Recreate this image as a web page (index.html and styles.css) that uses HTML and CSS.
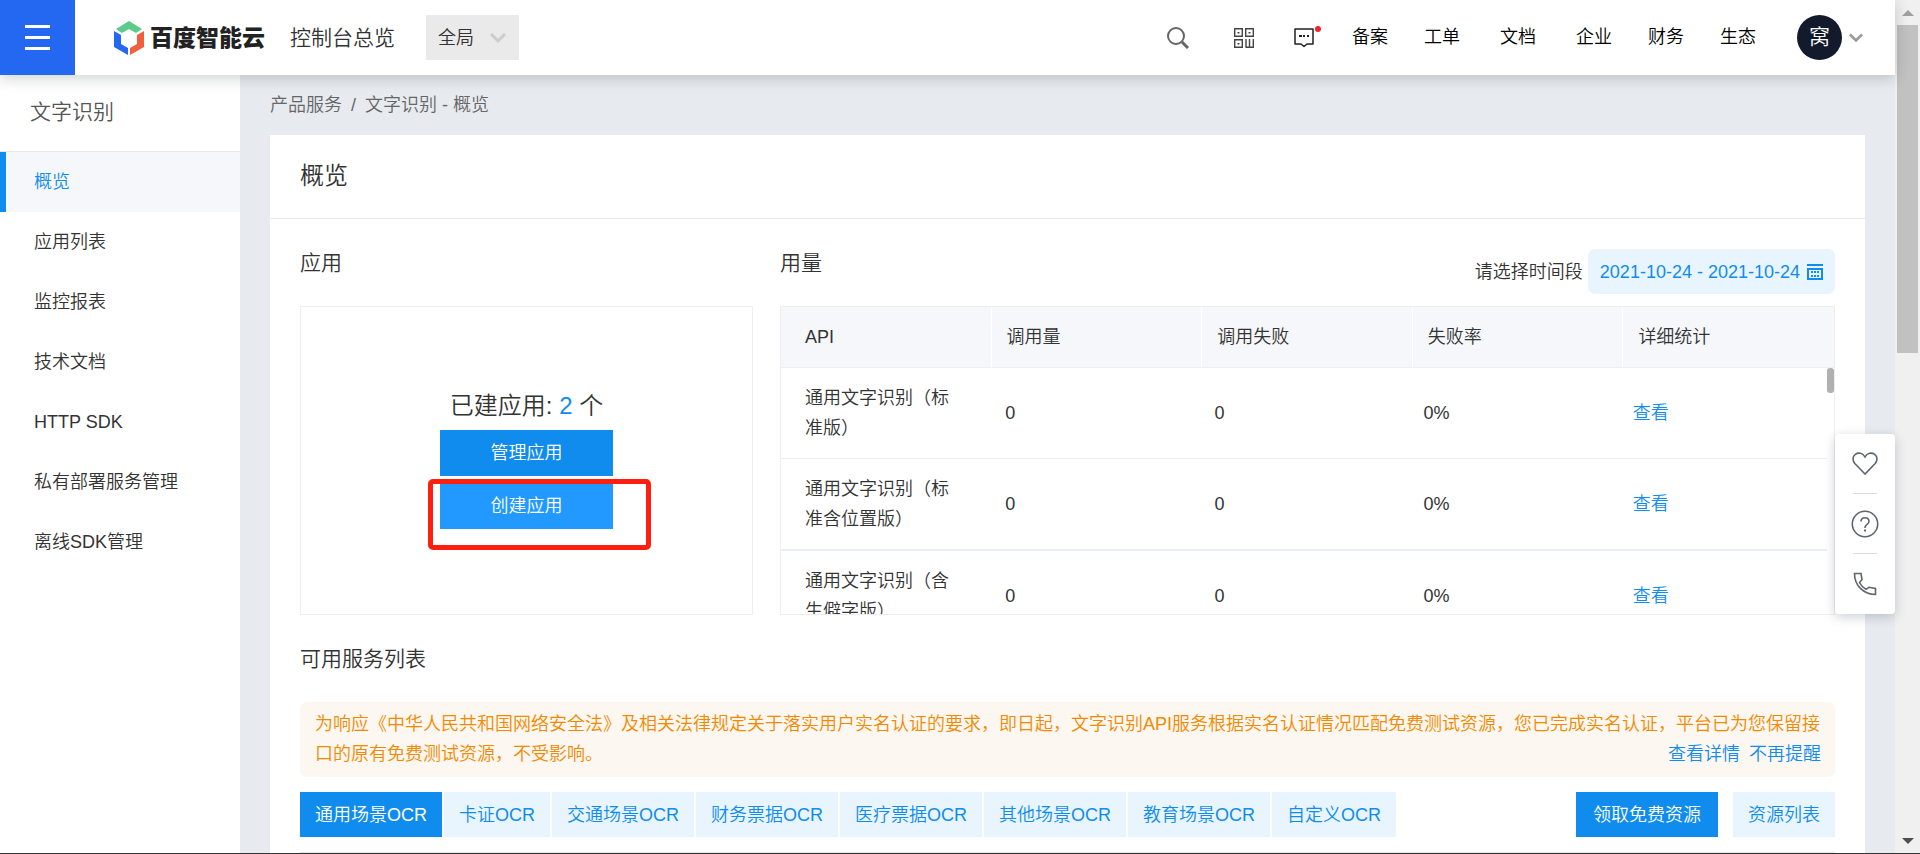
FILE: index.html
```
<!DOCTYPE html>
<html lang="zh-CN">
<head>
<meta charset="utf-8">
<title>文字识别 - 概览</title>
<link rel="stylesheet" href="styles.css">
</head>
<body>
<div class="window">
  <div class="page">
    <header class="topbar">
      <button class="menu-btn" aria-label="菜单"><span></span><span></span><span></span></button>
      <a class="brand" href="#">
        <svg width="30" height="34" viewBox="0 0 30 34" aria-hidden="true">
          <path fill="#5acb8b" d="M15 0 28 8 22 12 15 8 8 12 2 8z"/>
          <path fill="#2468f2" d="M0 10 7 14V23L14 27V34L0 26z"/>
          <path fill="#f0603c" d="M30 10 23 14V23L16 27V34L30 26z"/>
        </svg>
        <span>百度智能云</span>
      </a>
      <a class="overview" href="#">控制台总览</a>
      <button class="region">全局
        <svg width="18" height="12" viewBox="0 0 18 12" aria-hidden="true"><path d="M2 2 9 9 16 2" fill="none" stroke="#ccc" stroke-width="3"/></svg>
      </button>
      <nav class="tools">
        <button class="icon-btn search" aria-label="搜索"><svg width="22" height="22" viewBox="0 0 22 22"><g fill="none" stroke="#666" stroke-width="2"><circle cx="9" cy="9" r="8"/><path d="M15 15 21 21" stroke-width="3"/></g></svg></button>
        <button class="icon-btn qr" aria-label="二维码"><svg width="20" height="20" viewBox="0 0 20 20"><g fill="none" stroke="#444" stroke-width="1.4"><path d="M.7.7H8.300V8.300H.7zM11.700.7H19.300V8.300H11.700zM.7 11.700H8.300V19.300H.7zM12 11V19.300M15.500 11V19.300M19.300 11V19.300H11.500"/></g><path fill="#444" d="M3.500 4h2v1.400h-2zM14.500 4h2v1.400h-2zM3.500 15h2v1.400h-2z"/></svg></button>
        <button class="icon-btn message" aria-label="消息"><svg width="20" height="20" viewBox="0 0 20 20"><path d="M1 1H19V16H13L10 18.500 7 16H1z" fill="none" stroke="#222" stroke-width="1.500" stroke-linejoin="round"/><path d="M5 8h3M9 8h2M13 8h2" stroke="#222" stroke-width="2"/></svg><i class="dot"></i></button>
        <a href="#">备案</a><a href="#">工单</a><a class="spaced" href="#">文档</a><a class="spaced" href="#">企业</a><a href="#">财务</a><a href="#">生态</a>
        <button class="account"><span class="avatar">窝</span><svg width="14" height="10" viewBox="0 0 14 10" aria-hidden="true"><path d="M1 1.500 7 7.500 13 1.500" fill="none" stroke="#999" stroke-width="2.500"/></svg></button>
      </nav>
    </header>
    <div class="shell">
      <aside class="sidebar">
        <h2>文字识别</h2>
        <nav>
          <a class="active" href="#">概览</a>
          <a href="#">应用列表</a>
          <a href="#">监控报表</a>
          <a href="#">技术文档</a>
          <a href="#">HTTP SDK</a>
          <a href="#">私有部署服务管理</a>
          <a href="#">离线SDK管理</a>
        </nav>
      </aside>
      <main class="main">
        <div class="crumbs"><a href="#">产品服务</a><span>/</span><a href="#">文字识别 - 概览</a></div>
        <section class="card">
          <h1>概览</h1>
          <div class="content">
            <div class="columns">
              <section class="apps">
                <div class="section-head"><h3>应用</h3></div>
                <div class="app-box">
                  <p>已建应用: <b>2</b> 个</p>
                  <button class="primary">管理应用</button>
                  <div class="marked"><button class="primary hover">创建应用</button><i class="marker"></i></div>
                </div>
              </section>
              <section class="usage">
                <div class="section-head">
                  <h3>用量</h3>
                  <div class="period"><label for="range">请选择时间段</label>
                    <button id="range" class="range">2021-10-24 - 2021-10-24
                      <svg width="16" height="16" viewBox="0 0 16 16" aria-hidden="true"><path fill="#108cee" d="M0 0H16V2H0zM0 4H16V16H0z"/><path fill="#e8f5ff" d="M2 6H14V14H2z"/><path fill="#108cee" d="M4 7h2v2H4zM7 7h2v2H7zM10 7h2v2h-2zM4 11h2v2H4zM7 11h2v2H7zM10 11h2v2h-2z"/></svg>
                    </button>
                  </div>
                </div>
                <div class="usage-box">
                  <table class="head">
                    <thead><tr><th>API</th><th>调用量</th><th>调用失败</th><th>失败率</th><th>详细统计</th></tr></thead>
                  </table>
                  <div class="rows">
                    <table class="body">
                      <tbody>
                        <tr><td>通用文字识别（标准版）</td><td>0</td><td>0</td><td>0%</td><td><a href="#">查看</a></td></tr>
                        <tr><td>通用文字识别（标准含位置版）</td><td>0</td><td>0</td><td>0%</td><td><a href="#">查看</a></td></tr>
                        <tr><td>通用文字识别（含生僻字版）</td><td>0</td><td>0</td><td>0%</td><td><a href="#">查看</a></td></tr>
                      </tbody>
                    </table>
                    <i class="thumb"></i>
                  </div>
                </div>
              </section>
            </div>
            <h3 class="services">可用服务列表</h3>
            <div class="notice">为响应《中华人民共和国网络安全法》及相关法律规定关于落实用户实名认证的要求，即日起，文字识别API服务根据实名认证情况匹配免费测试资源，您已完成实名认证，平台已为您保留接口的原有免费测试资源，不受影响。<span class="notice-links"><a href="#">查看详情</a><a href="#">不再提醒</a></span></div>
            <div class="tab-row">
              <div class="tabs">
                <button class="tab current">通用场景OCR</button>
                <button class="tab">卡证OCR</button>
                <button class="tab">交通场景OCR</button>
                <button class="tab">财务票据OCR</button>
                <button class="tab">医疗票据OCR</button>
                <button class="tab">其他场景OCR</button>
                <button class="tab">教育场景OCR</button>
                <button class="tab">自定义OCR</button>
              </div>
              <div class="actions"><button class="claim">领取免费资源</button><button class="tab">资源列表</button></div>
            </div>
            <div class="list-top"></div>
          </div>
        </section>
      </main>
    </div>
    <aside class="float">
      <button aria-label="收藏"><svg width="26" height="24" viewBox="0 0 26 24"><path d="M13 22 2.800 11.500C.2 8.500.6 4.500 3.300 2.400 6.300.2 10.800.8 13 5 15.200.8 19.700.2 22.700 2.400 25.400 4.500 25.800 8.500 23.200 11.500z" fill="none" stroke="#5f656e" stroke-width="1.600"/></svg></button>
      <button aria-label="帮助"><svg width="28" height="28" viewBox="0 0 28 28"><g fill="none" stroke="#5f656e" stroke-width="1.600"><circle cx="14" cy="14" r="12.700"/><path d="M10 11.500C10 6.500 18 6.500 18 11.500 18 14.200 14 14 14 18"/></g><path fill="#5f656e" d="M13 19.500h2v2h-2z"/></svg></button>
      <button aria-label="电话"><svg width="24" height="24" viewBox="0 0 24 24"><path d="M1.500 1.500H8L9 7.500 6.500 10.500C8 13.500 10.500 16 13 17.300L16 15.300 22.500 16.500V22.500C11 22.500 1.500 14 1.500 1.500z" fill="none" stroke="#5f656e" stroke-width="1.600"/></svg></button>
    </aside>
  </div>
  <div class="scrollbar" aria-hidden="true"><i class="arrow up"></i><i class="grip"></i><i class="arrow down"></i></div>
</div>
</body>
</html>
```
FILE: styles.css
```
* { box-sizing: border-box; }
body {
  margin: 0;
  font-family: "Liberation Sans", "Noto Sans CJK SC", sans-serif;
  font-size: 18px;
  font-weight: 350;
  line-height: 30px;
  color: #333;
  background: #e7ebf0;
}
button { font: inherit; color: inherit; border: 0; background: none; padding: 0; cursor: pointer; }
a { color: inherit; text-decoration: none; }
h1, h2, h3, p { margin: 0; font-weight: 350; }
svg { display: block; flex: none; }

.window { display: flex; height: 100vh; overflow: hidden; border-bottom: 1px solid #333; }
.page { flex: 1; min-width: 0; display: flex; flex-direction: column; position: relative; }

.topbar {
  display: flex; align-items: center; flex: none; height: 75px;
  background: #fff; box-shadow: 0 3px 14px rgba(0, 20, 20, 0.2);
  position: relative; z-index: 2;
}
.menu-btn {
  width: 75px; height: 75px; background: #2468f2;
  display: flex; flex-direction: column; align-items: center; justify-content: center; gap: 8px;
}
.menu-btn span { width: 25px; height: 3px; background: #fff; }
.brand { display: flex; align-items: center; gap: 6px; margin-left: 39px; font-size: 23px; font-weight: 900; color: #222; }
.overview { margin-left: 25px; font-size: 21px; }
.region {
  display: flex; align-items: center; justify-content: space-between;
  width: 93px; height: 45px; padding: 0 12px; margin-left: 31px; background: #eaeaea;
}
.tools { display: flex; align-items: center; gap: 36px; margin-left: auto; padding-right: 32px; color: #000; }
.tools > a { padding-bottom: 2px; }
.icon-btn { position: relative; }
.search { margin-right: 9px; }
.qr { margin-right: 4px; }
.message { margin-right: 2px; }
.spaced { margin-left: 4px; }
.dot { position: absolute; top: -2px; right: -7px; width: 6px; height: 6px; border-radius: 50%; background: #f5222d; }
.account { display: flex; align-items: center; gap: 7px; margin-left: 5px; }
.avatar { width: 45px; height: 45px; border-radius: 50%; background: #131a2c; color: #fff; font-size: 21px; line-height: 44px; text-align: center; }

.shell { display: flex; flex: 1; min-height: 0; }
.sidebar { flex: none; width: 240px; background: #fff; }
.sidebar h2 { height: 77px; padding: 22px 30px; font-size: 21px; color: #555; border-bottom: 1px solid #e6e9ed; }
.sidebar a { display: block; padding: 15px 28px; border-left: 6px solid transparent; }
.sidebar .active { color: #108cee; background: #f6f7fb; border-color: #108cee; }

.main { flex: 1; min-width: 0; padding: 0 30px; overflow: hidden; }
.crumbs { display: flex; gap: 9px; padding: 15px 0; color: #666; }
.card { background: #fff; }
.card h1 { padding: 25px 30px 27px; font-size: 24px; line-height: 31px; border-bottom: 1px solid #ebebeb; }
.content { padding: 30px 30px 0; }
.columns { display: flex; gap: 27px; }
.apps { flex: 453; min-width: 0; }
.usage { flex: 1055; min-width: 0; }
.section-head { display: flex; align-items: flex-start; justify-content: space-between; height: 57px; }
h3 { font-size: 21px; line-height: 28px; }
.app-box {
  display: flex; flex-direction: column; align-items: center;
  height: 309px; padding-top: 83px; border: 1px solid #eee;
}
.app-box p { font-size: 24px; line-height: 32px; margin-bottom: 8px; }
.app-box b { font-weight: 400; color: #108cee; }
.primary { width: 173px; height: 46px; background: #108cee; color: #fff; }
.hover { background: #29f; display: block; }
.marked { position: relative; margin-top: 7px; }
.marker { position: absolute; top: -4px; left: -12px; right: -38px; bottom: -21px; border: 5px solid #ff1f10; border-radius: 5px; pointer-events: none; }

.period { display: flex; align-items: center; gap: 5px; }
.range {
  display: flex; align-items: center; gap: 7px; height: 45px; padding: 0 12px;
  border-radius: 7px; background: #e8f5ff; color: #108cee;
}
.usage-box { height: 309px; border: 1px solid #eee; overflow: hidden; display: flex; flex-direction: column; }
table { width: 100%; table-layout: fixed; border-collapse: separate; border-spacing: 0; }
th { height: 61px; padding: 0 15px; font-weight: 350; text-align: left; background: #f6f7fb; border-bottom: 1px solid #eee; border-right: 1px solid #fff; }
th:last-child { border-right: 0; }
th:first-child, td:first-child { padding-left: 24px; padding-right: 36px; }
.rows { flex: 1; min-height: 0; display: flex; align-items: flex-start; overflow: hidden; }
.body { flex: 1; }
td { padding: 15px; border-bottom: 1px solid #eaedf7; }
tr:nth-child(2) td { border-bottom-width: 2px; }
td a, .notice a { color: #108cee; }
.thumb { flex: none; width: 7px; height: 25px; border-radius: 3px; background: #b0b0b0; }

.services { padding: 30px 0 29px; }
.notice { padding: 7px 14px 8px 15px; border-radius: 7px; background: #fcf7f0; color: #f38900; }
.notice-links { float: right; display: flex; gap: 9px; }
.tab-row { display: flex; justify-content: space-between; margin: 15px 0; }
.tabs { display: flex; gap: 2px; }
.tab { height: 45px; padding: 0 15px; background: #e8f5ff; color: #108cee; white-space: nowrap; }
.current, .claim { background: #108cee; color: #fff; }
.claim { height: 45px; padding: 0 17px; }
.actions { display: flex; gap: 15px; }
.list-top { height: 60px; border-top: 1px solid #e6e6e6; }

.float {
  position: absolute; right: 0; top: 434px; z-index: 3; width: 60px; padding: 0 18px;
  background: #fff; border-radius: 4px; box-shadow: 0 3px 12px rgba(0, 20, 40, 0.2);
}
.float button { display: flex; align-items: center; justify-content: center; width: 24px; height: 60px; border-bottom: 1px solid #ddd; }
.float button:last-child { border-bottom: 0; }

.scrollbar { flex: none; width: 25px; padding: 10px 2px 9px; background: #f0f0f0; display: flex; flex-direction: column; align-items: center; }
.grip { width: 21px; height: 328px; margin: 9px 0 auto; background: #c1c1c1; }
.arrow { border: 6px solid transparent; }
.up { border-top: 0; border-bottom-color: #a0a0a0; }
.down { border-bottom: 0; border-top-color: #505050; }
```
